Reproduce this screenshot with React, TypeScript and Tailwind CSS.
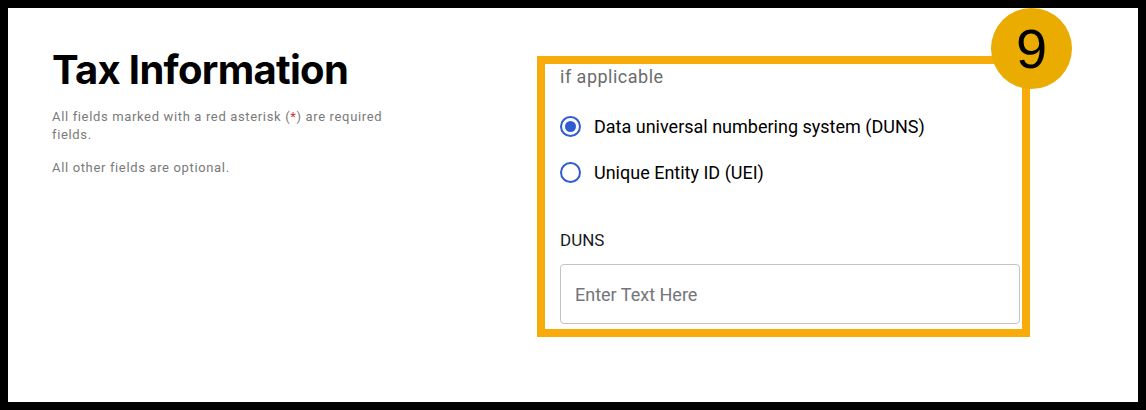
import React from "react";

export default function App() {
  return (
    <div className="w-[1146px] h-[410px] bg-black p-2" style={{ fontFamily: "Roboto, 'Liberation Sans', sans-serif" }}>
      <div className="w-full h-full bg-white flex">
        <div className="w-[485px] pl-[44px] pt-[38px]">
          <h1 className="text-[40px] leading-[48px] font-bold text-black tracking-[-0.7px]" style={{ fontFamily: "Inter, 'Liberation Sans', sans-serif" }}>Tax Information</h1>
          <p className="mt-[14px] w-[340px] text-[13px] leading-[18px] text-[#7a7a7a] tracking-[0.65px]">
            All fields marked with a red asterisk (<span className="text-[#d32f2f]">*</span>) are required fields.
          </p>
          <p className="mt-[15px] text-[13px] leading-[18px] text-[#7a7a7a] tracking-[0.65px]">All other fields are optional.</p>
        </div>
        <div className="relative mt-[48px] ml-[44px] w-[493px] h-[281px] border-[8px] border-[#f8ac0b] pl-[15px] pr-[2px]">
          <div className="pt-[1px] text-[18px] leading-[24px] text-[#6b6b6b] tracking-[0.5px]">if applicable</div>
          <div className="mt-[25px] flex flex-col gap-[22px]">
            <label className="flex items-center gap-[13px] h-[24px]">
              <span className="w-[21px] h-[21px] rounded-full border-[2px] border-[#2f5bd3] flex items-center justify-center">
                <span className="w-[11px] h-[11px] rounded-full bg-[#2f5bd3]" />
              </span>
              <span className="text-[18px] text-black">Data universal numbering system (DUNS)</span>
            </label>
            <label className="flex items-center gap-[13px] h-[24px]">
              <span className="w-[21px] h-[21px] rounded-full border-[2px] border-[#2f5bd3]" />
              <span className="text-[18px] text-black">Unique Entity ID (UEI)</span>
            </label>
          </div>
          <div className="mt-[44px] text-[17px] leading-[24px] text-[#1a1a1a]">DUNS</div>
          <div className="mt-[12px] h-[60px] rounded-[4px] border border-[#c4c4c4] flex items-center pl-[14px]">
            <span className="text-[18px] text-[#74747c]">Enter Text Here</span>
          </div>
          <div className="absolute -top-[56px] right-[-50px] w-[81px] h-[81px] rounded-full bg-[#eaac00] flex items-center justify-center">
            <span className="text-[56px] leading-none text-black" style={{ fontFamily: "'Liberation Sans', Arial, sans-serif" }}>9</span>
          </div>
        </div>
      </div>
    </div>
  );
}
